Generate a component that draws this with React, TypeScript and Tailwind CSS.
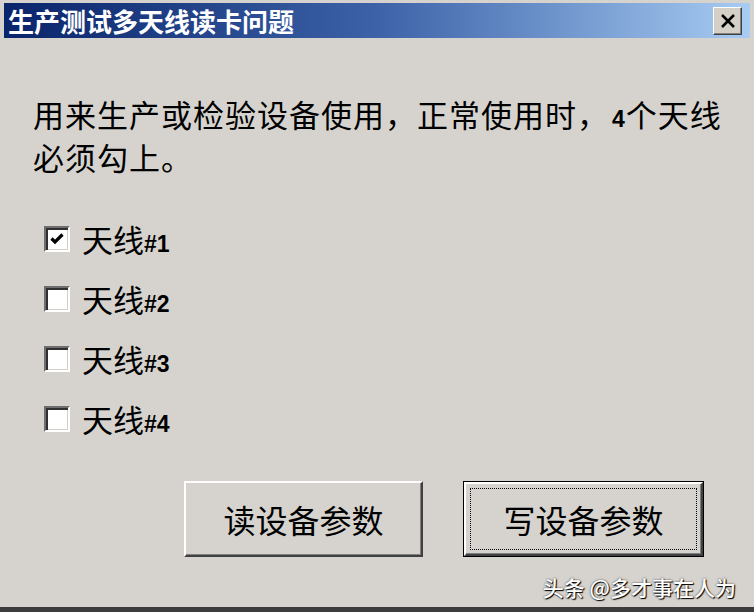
import { useState } from "react";

type Antenna = { id: number; checked: boolean };

const cjk = "font-['Noto_Sans_CJK_SC',sans-serif]";
const latinBold = "font-['Liberation_Sans',Arial,sans-serif] font-bold";

function CheckBox({ checked, onClick }: { checked: boolean; onClick: () => void }) {
  return (
    <button
      type="button"
      onClick={onClick}
      className="flex h-[26px] w-[26px] items-center justify-center border-2 border-t-[#6e6e6e] border-l-[#6e6e6e] border-r-white border-b-white bg-white shadow-[inset_2px_2px_0_#303030,inset_-1px_-1px_0_#d4d0c8]"
    >
      {checked && (
        <svg width="16" height="14" viewBox="0 0 16 14">
          <path d="M2.5 6.5 L6 10 L13.5 2.5" fill="none" stroke="#000" strokeWidth="3.2" />
        </svg>
      )}
    </button>
  );
}

export default function App() {
  const [antennas, setAntennas] = useState<Antenna[]>([
    { id: 1, checked: true },
    { id: 2, checked: false },
    { id: 3, checked: false },
    { id: 4, checked: false },
  ]);

  const toggle = (id: number) =>
    setAntennas((list) => list.map((a) => (a.id === id ? { ...a, checked: !a.checked } : a)));

  return (
    <div className={`relative flex h-[612px] w-[754px] flex-col bg-[#d6d3ce] ${cjk}`}>
      {/* window caption */}
      <div className="mx-[4px] mt-[3px] flex h-[35px] items-center justify-between bg-gradient-to-r from-[#0a246a] via-[#3d62a8] to-[#a8ccf2] pl-[4px] pr-[8px]">
        <span className="text-[26px] font-bold leading-none text-white">生产测试多天线读卡问题</span>
        <button
          type="button"
          className="flex h-[28px] w-[29px] items-center justify-center border border-t-white border-l-white border-r-[#404040] border-b-[#404040] bg-[#d4d0c8] shadow-[inset_-1px_-1px_0_#808080]"
        >
          <svg width="16" height="14" viewBox="0 0 16 14">
            <path d="M2 1 L14 13 M14 1 L2 13" stroke="#000" strokeWidth="2.6" />
          </svg>
        </button>
      </div>

      {/* dialog body */}
      <div className="flex flex-1 flex-col">
        <p className="mt-[57px] pl-[33px] text-[31px] leading-[37px] tracking-[1px] text-black">
          用来生产或检验设备使用，正常使用时，
          <span className={`${latinBold} pl-[3px] text-[23px]`}>4</span>个天线
          <br />
          必须勾上。
        </p>

        <div className="mt-[34px] flex flex-col pl-[44px]">
          {antennas.map((a) => (
            <label key={a.id} className="flex h-[60px] items-center gap-[12px]">
              <CheckBox checked={a.checked} onClick={() => toggle(a.id)} />
              <span className="text-[31px] leading-none text-black">
                天线<span className={`${latinBold} text-[23px]`}>#{a.id}</span>
              </span>
            </label>
          ))}
        </div>

        <div className="mt-[32px] flex gap-[40px] pl-[184px]">
          <button
            type="button"
            className="flex h-[76px] w-[239px] items-center justify-center border-2 border-t-white border-l-white border-r-[#404040] border-b-[#404040] bg-[#d6d3ce] text-[32px] text-black shadow-[inset_-1px_-1px_0_#808080]"
          >
            读设备参数
          </button>
          <div className="h-[76px] w-[241px] border border-black">
            <button
              type="button"
              className="flex h-full w-full items-center justify-center border-2 border-t-white border-l-white border-r-[#404040] border-b-[#404040] bg-[#d6d3ce] p-[4px] shadow-[inset_-1px_-1px_0_#808080]"
            >
              <span className="flex h-full w-full items-center justify-center border border-dotted border-black text-[32px] text-black">
                写设备参数
              </span>
            </button>
          </div>
        </div>
      </div>

      <div className="h-[5px] bg-[#3c3c3c]" />

      <span className="absolute bottom-[14px] right-[18px] text-[21px] font-medium leading-none text-white [text-shadow:1px_1px_1px_#000,0_0_2px_#333]">
        头条 @多才事在人为
      </span>
    </div>
  );
}
